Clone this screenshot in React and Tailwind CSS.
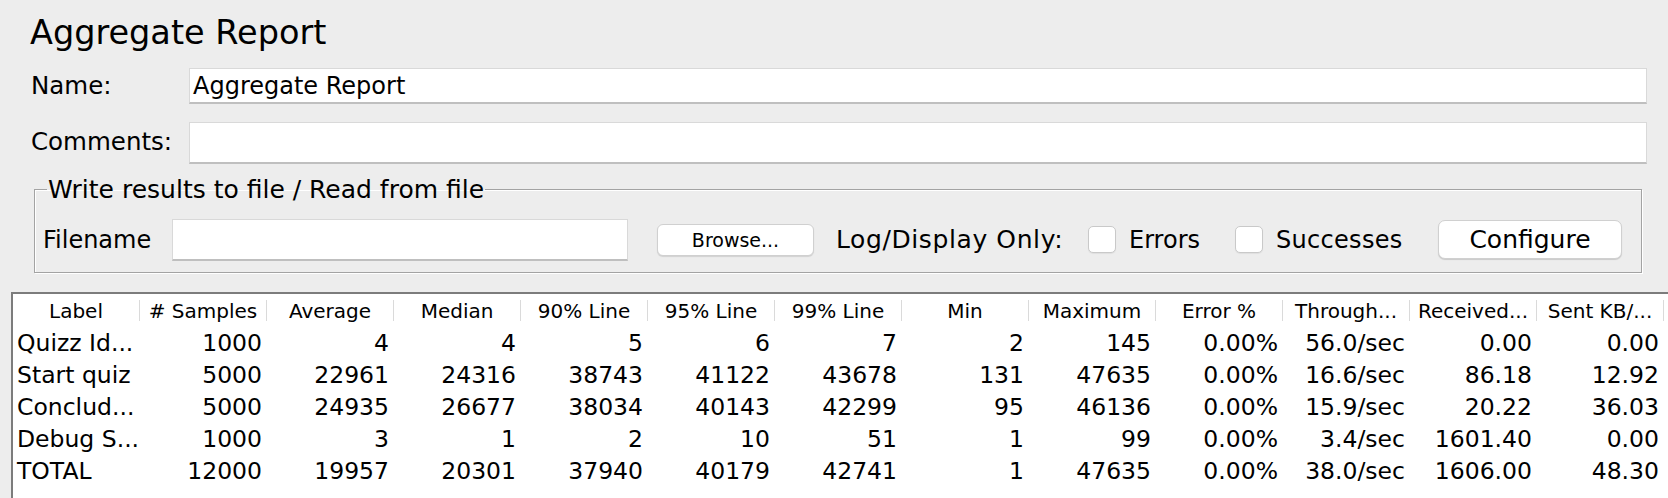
import React from 'react';

const columns = [
  'Label',
  '# Samples',
  'Average',
  'Median',
  '90% Line',
  '95% Line',
  '99% Line',
  'Min',
  'Maximum',
  'Error %',
  'Through...',
  'Received...',
  'Sent KB/...',
];

const rows = [
  ['Quizz Id...', '1000', '4', '4', '5', '6', '7', '2', '145', '0.00%', '56.0/sec', '0.00', '0.00'],
  ['Start quiz', '5000', '22961', '24316', '38743', '41122', '43678', '131', '47635', '0.00%', '16.6/sec', '86.18', '12.92'],
  ['Conclud...', '5000', '24935', '26677', '38034', '40143', '42299', '95', '46136', '0.00%', '15.9/sec', '20.22', '36.03'],
  ['Debug S...', '1000', '3', '1', '2', '10', '51', '1', '99', '0.00%', '3.4/sec', '1601.40', '0.00'],
  ['TOTAL', '12000', '19957', '20301', '37940', '40179', '42741', '1', '47635', '0.00%', '38.0/sec', '1606.00', '48.30'],
];

function TextField({ value, className }) {
  return (
    <div
      className={`bg-white border border-[#d9d9d9] border-b-2 border-b-[#bfbfbf] flex items-center pl-[3px] text-[24px] text-black ${className}`}
    >
      {value}
    </div>
  );
}

function Checkbox() {
  return <div className="w-[28px] h-[27px] rounded-[5px] bg-white border border-[#c9c9c9] shadow-[0_1px_1px_rgba(0,0,0,0.06)]" />;
}

export default function App() {
  return (
    <div className="w-[1668px] h-[498px] bg-[#ededed] overflow-hidden flex flex-col font-['DejaVu_Sans',sans-serif] text-black">
      {/* Title */}
      <div className="pt-[13px] pl-[30px] text-[33.5px] leading-[40px]">Aggregate Report</div>

      {/* Name */}
      <div className="mt-[15px] flex items-center">
        <div className="w-[189px] pl-[31px] text-[24.5px]">Name:</div>
        <TextField value="Aggregate Report" className="w-[1458px] h-[36px]" />
      </div>

      {/* Comments */}
      <div className="mt-[17px] flex items-center">
        <div className="w-[189px] pl-[31px] text-[24.5px]">Comments:</div>
        <TextField value="" className="w-[1458px] h-[42px]" />
      </div>

      {/* Write results group */}
      <fieldset className="mt-[13px] ml-[34px] w-[1608px] border border-[#a3a3a3] shadow-[1px_1px_0_#ffffff,inset_1px_1px_0_#ffffff] px-[8px] pt-[16px] pb-[11px]">
        <legend className="ml-[4px] px-[1px] text-[25px] leading-[26px]">Write results to file / Read from file</legend>
        <div className="flex items-center h-[42px]">
          <div className="w-[129px] text-[24px]">Filename</div>
          <TextField value="" className="w-[456px] h-[42px]" />
          <button className="ml-[29px] w-[157px] h-[32px] rounded-[6px] bg-white border border-[#d0d0d0] shadow-[0_1px_1px_rgba(0,0,0,0.12)] text-[19px] flex items-center justify-center">
            Browse...
          </button>
          <div className="ml-[22px] w-[230px] text-[25px] tracking-[0.6px] whitespace-nowrap">Log/Display Only:</div>
          <div className="ml-[22px]">
            <Checkbox />
          </div>
          <div className="ml-[13px] w-[106px] text-[24px]">Errors</div>
          <Checkbox />
          <div className="ml-[13px] w-[149px] text-[24px] tracking-[0.3px]">Successes</div>
          <button className="ml-[13px] w-[184px] h-[39px] rounded-[7px] bg-white border border-[#d0d0d0] shadow-[0_1px_1px_rgba(0,0,0,0.15)] text-[25px] flex items-center justify-center">
            Configure
          </button>
        </div>
      </fieldset>

      {/* Results table */}
      <div className="mt-[19px] ml-[11px] w-[1670px] h-[230px] shrink-0 bg-white border-2 border-[#7c7c7c]">
        <div className="flex h-[34px]">
          {columns.map((c) => (
            <div key={c} className="w-[127px] shrink-0 flex items-center">
              <div className="flex-1 text-center text-[20px] whitespace-nowrap overflow-hidden">{c}</div>
              <div className="w-px h-[21px] bg-[#dadada]" />
            </div>
          ))}
        </div>
        {rows.map((r, i) => (
          <div key={i} className="flex h-[32px] items-center">
            {r.map((v, j) => (
              <div
                key={j}
                className={`w-[127px] shrink-0 text-[23.5px] whitespace-nowrap overflow-hidden ${
                  j === 0 ? 'pl-[4px] text-left' : 'pr-[5px] text-right'
                }`}
              >
                {v}
              </div>
            ))}
          </div>
        ))}
      </div>
    </div>
  );
}
